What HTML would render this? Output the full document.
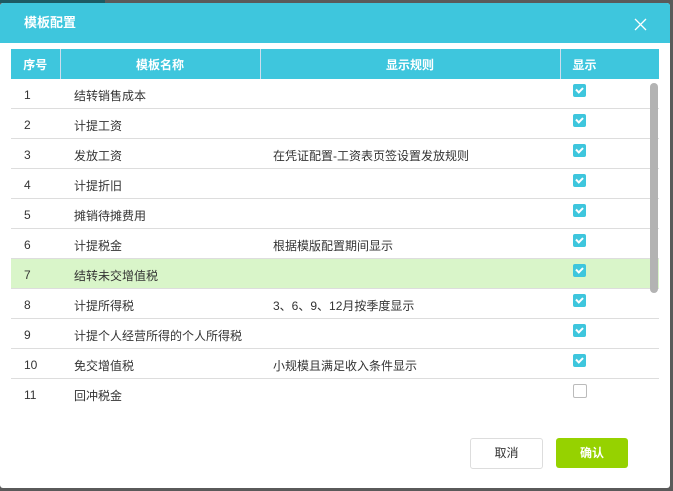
<!DOCTYPE html>
<html><head><meta charset="utf-8"><style>
body{margin:0;width:673px;height:491px;background:#5a5a5a;position:relative;overflow:hidden;font-family:"Liberation Sans","Noto Sans CJK SC",sans-serif;}
.top{position:absolute;left:0;top:0;width:105px;height:3px;background:#1d5a63}
.dlg{position:absolute;left:0;top:3px;width:670px;height:485px;background:#fff;border-radius:3px;overflow:hidden}
.hd{height:40px;background:#3ec6dd;color:#fff;font-weight:bold;font-size:13px;line-height:40px;padding-left:24px;position:relative}
.x{position:absolute;left:634px;top:15px;width:13px;height:13px}
table{position:absolute;left:11px;top:46px;border-collapse:collapse;table-layout:fixed;width:648px;font-size:12px;color:#333}
th{background:#3ec6dd;color:#fff;height:30px;padding:0;border-left:1px solid #cde;font-weight:bold;text-align:center}
th:first-child{border-left:none}
td{border-bottom:1px solid #ddd;padding:3px 0 0 0;height:26px}
td.n{padding-left:13px}td.m{padding-left:14px}td.r{padding-left:13px}
tr.g td{background:#d9f5c9}
.cb{display:inline-block;width:13px;height:13px;border-radius:2px;background:#3ec6dd;margin-left:13px;position:relative;top:-3px}
.cb::after{content:"";position:absolute;left:3px;top:3px;width:5px;height:3px;border-left:2px solid #fff;border-bottom:2px solid #fff;transform:rotate(-45deg)}
.cb.e{background:#fff;border:1px solid #bbb;width:12px;height:12px}.cb.e::after{display:none}
.sb{position:absolute;left:650px;top:80px;width:8px;height:210px;background:#b3b3b3;border-radius:4px}
.btn{position:absolute;top:435px;width:72px;height:30px;border-radius:3px;font-size:12px;text-align:center;line-height:30px}
</style></head><body>
<div class="top"></div>
<div class="dlg">
<div class="hd">模板配置<svg class="x" viewBox="0 0 13 13"><path d="M1 1L12 12M12 1L1 12" stroke="#fff" stroke-width="1.3"/></svg></div>
<table>
<colgroup><col style="width:49px"><col style="width:200px"><col style="width:300px"><col style="width:99px"></colgroup>
<tr><th>序号</th><th>模板名称</th><th>显示规则</th><th style="text-align:left;padding-left:12px">显示</th></tr>
<tr><td class="n">1</td><td class="m">结转销售成本</td><td class="r"></td><td><span class="cb"></span></td></tr>
<tr><td class="n">2</td><td class="m">计提工资</td><td class="r"></td><td><span class="cb"></span></td></tr>
<tr><td class="n">3</td><td class="m">发放工资</td><td class="r">在凭证配置-工资表页签设置发放规则</td><td><span class="cb"></span></td></tr>
<tr><td class="n">4</td><td class="m">计提折旧</td><td class="r"></td><td><span class="cb"></span></td></tr>
<tr><td class="n">5</td><td class="m">摊销待摊费用</td><td class="r"></td><td><span class="cb"></span></td></tr>
<tr><td class="n">6</td><td class="m">计提税金</td><td class="r">根据模版配置期间显示</td><td><span class="cb"></span></td></tr>
<tr class="g"><td class="n">7</td><td class="m">结转未交增值税</td><td class="r"></td><td><span class="cb"></span></td></tr>
<tr><td class="n">8</td><td class="m">计提所得税</td><td class="r">3、6、9、12月按季度显示</td><td><span class="cb"></span></td></tr>
<tr><td class="n">9</td><td class="m">计提个人经营所得的个人所得税</td><td class="r"></td><td><span class="cb"></span></td></tr>
<tr><td class="n">10</td><td class="m">免交增值税</td><td class="r">小规模且满足收入条件显示</td><td><span class="cb"></span></td></tr>
<tr><td class="n" style="border:none">11</td><td class="m" style="border:none">回冲税金</td><td style="border:none"></td><td style="border:none"><span class="cb e"></span></td></tr>
</table>
<div class="sb"></div>
<div class="btn" style="left:470px;border:1px solid #ddd;color:#333;width:71px;height:29px;line-height:29px">取消</div>
<div class="btn" style="left:556px;background:#96d200;color:#fff;font-weight:bold">确认</div>
</div>
</body></html>
